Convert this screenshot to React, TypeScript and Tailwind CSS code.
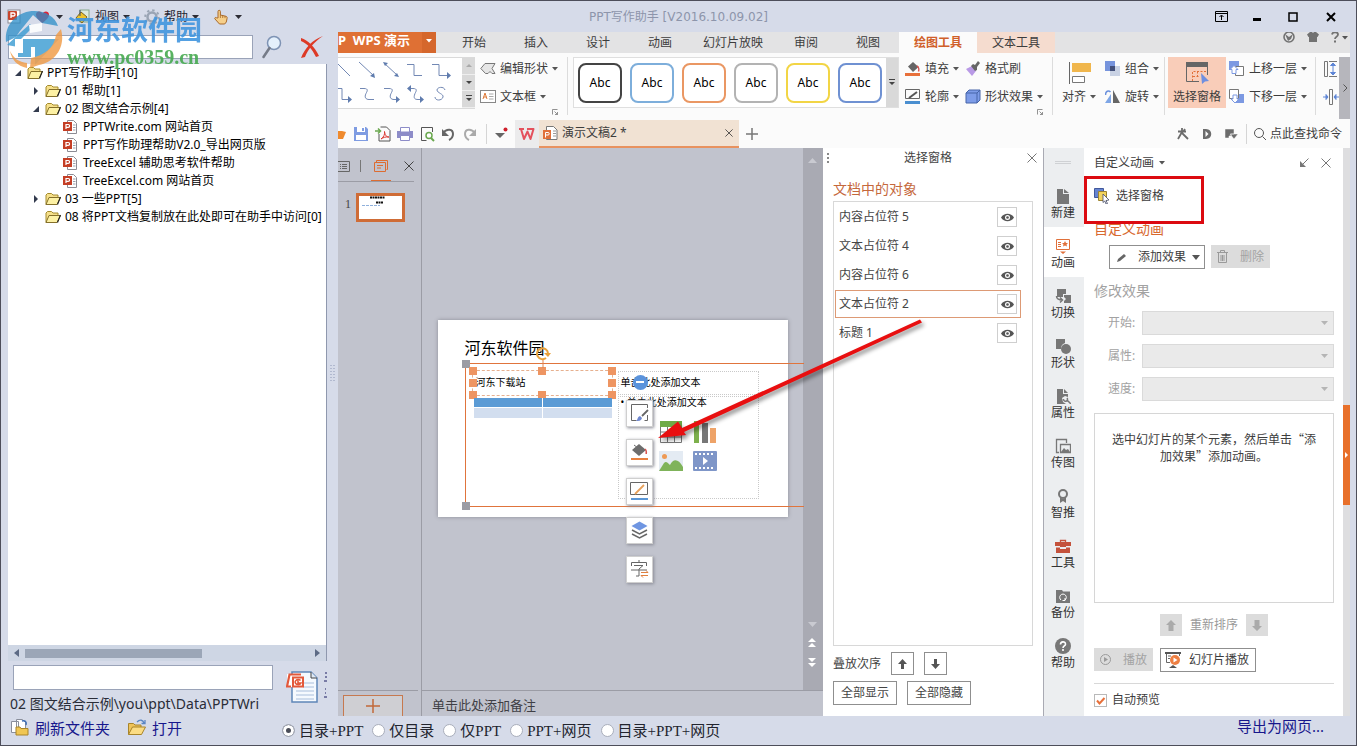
import React from "react";

type Kids = { children?: React.ReactNode };

function Icon({ w = 16, h = 16, children }: { w?: number; h?: number } & Kids) {
  return (
    <svg width={w} height={h} viewBox={`0 0 ${w} ${h}`} fill="none" className="shrink-0" aria-hidden="true">
      {children}
    </svg>
  );
}

function Caret({ className = "text-[#555]" }: { className?: string }) {
  return (
    <svg width="6" height="4" viewBox="0 0 6 4" className={`shrink-0 ${className}`} aria-hidden="true">
      <path d="M0 0h6L3 3.5z" fill="currentColor" />
    </svg>
  );
}

function Cross({ size = 10, className = "" }: { size?: number; className?: string }) {
  return (
    <svg width={size} height={size} viewBox="0 0 10 10" className={`shrink-0 ${className}`} aria-hidden="true">
      <path d="M.5.5l9 9M9.5.5l-9 9" stroke="currentColor" fill="none" />
    </svg>
  );
}

/* ---------- title bar ---------- */

function MenuCaret() {
  return (
    <svg width="7" height="4" viewBox="0 0 7 4" className="shrink-0" aria-hidden="true">
      <path d="M0 0h7L3.500 4z" fill="#2c2c34" />
    </svg>
  );
}

function TitleBar() {
  return (
    <header className="relative flex h-[31px] shrink-0 items-center justify-between">
      <nav className="flex items-center pl-[6px] text-[#1f2430]">
        <button aria-label="应用" className="mr-3">
          <Icon>
            <rect x="1" y="1" width="12" height="13" fill="#fff" stroke="#8a8a92" />
            <rect x="1" y="2" width="9" height="9" rx="1" fill="#c8452c" />
            <path d="M4 9V4h2.500a1.500 1.500 0 010 3H4" stroke="#fff" strokeWidth="1.300" />
          </Icon>
        </button>
        <button aria-label="收藏" className="mr-3 flex items-center gap-[6px]">
          <Icon w={15} h={14}>
            <path d="M7.500 13C3 9.500 1 7.500 1 4.600 1 1 5.800.400 7.500 3.600 9.200.400 14 1 14 4.600c0 2.900-2 4.900-6.500 8.400z" fill="#dc2438" />
          </Icon>
          <MenuCaret />
        </button>
        <button className="mr-[14px] flex items-center gap-1">
          <Icon>
            <rect x="5" y="1" width="9" height="12" fill="#dcebdc" stroke="#86a78a" />
            <path d="M1 9l5-6 6 5-5 6z" fill="#eec42a" stroke="#7c6420" />
            <path d="M5 7V1" stroke="#41506a" />
          </Icon>
          视图
          <MenuCaret />
        </button>
        <button className="mr-[14px] flex items-center gap-1">
          <Icon>
            <circle cx="8" cy="8" r="4.500" stroke="#9aa4b4" strokeWidth="2.500" />
            <circle cx="8" cy="8" r="6.800" stroke="#9aa4b4" strokeWidth="2" strokeDasharray="2.400 2.940" />
          </Icon>
          帮助
          <MenuCaret />
        </button>
        <button aria-label="手形工具" className="flex items-center gap-[6px]">
          <Icon>
            <path d="M5 9V2.500a1.200 1.200 0 012.400 0V6l5.600 1.300c1 .300 1.300 1 1.100 2l-.800 3.700-1.600 2H6.500L1.800 9.800c-.400-1 .800-1.800 1.700-1z" fill="#f6cf8a" stroke="#a8692a" />
            <path d="M7.400 6v3M9.700 6.600V9M12 7.100v2" stroke="#a8692a" strokeWidth=".8" />
          </Icon>
          <MenuCaret />
        </button>
      </nav>
      <h1 className="pointer-events-none absolute inset-x-0 text-center font-['DejaVu_Sans','Noto_Sans_CJK_SC',sans-serif] text-xs text-[#8d95ab]">
        PPT写作助手 [V2016.10.09.02]
      </h1>
      <div className="flex items-center gap-6 pr-5 text-black">
        <button aria-label="置顶">
          <Icon w={13} h={12}>
            <path d="M.5.500h12v10H.500zM.500 2.500h12M6.500 9V4.500M4.500 6l2-2 2 2" stroke="currentColor" />
          </Icon>
        </button>
        <button aria-label="最小化">
          <Icon w={10} h={12}><path d="M1 7h8v3H1z" fill="currentColor" /></Icon>
        </button>
        <button aria-label="最大化" className="ml-[2px]">
          <Icon w={10} h={10}><path d="M1 1h8v8H1z" stroke="currentColor" strokeWidth="1.500" /></Icon>
        </button>
        <button aria-label="关闭" className="ml-1">
          <Icon w={10} h={10}><path d="M1 1l8 8M9 1L1 9" stroke="currentColor" strokeWidth="2" /></Icon>
        </button>
      </div>
    </header>
  );
}

function Watermark() {
  return (
    <div className="pointer-events-none absolute left-[4px] top-[8px] z-20 flex gap-1 opacity-90" aria-hidden="true">
      <svg width="58" height="60" viewBox="0 0 58 60">
        <path d="M1 33C-1 14 14 2 29 2c12 0 21 6 24 15L37 14 28 6 15 22l-4 6z" fill="#2f8fc9" opacity=".85" />
        <path d="M2 36l14-13 9-8 3 3-12 12h38L30 56v-18h-4v10H13v-10z" fill="#3b9bd1" opacity=".9" />
        <path d="M10 30h8v14h-8zM24 16l13-2v8l-12 2z" fill="#fff" />
        <path d="M56 20c5 18-6 33-22 36l-9 3 1-10c14-3 23-10 25-23z" fill="#f09a45" opacity=".9" />
        <path d="M5 42c4 8 9 11 17 12v5C12 57 7 51 5 42z" fill="#f09a45" opacity=".9" />
      </svg>
      <div className="flex flex-col pt-[4px]">
        <span className="font-['Noto_Sans_CJK_SC',sans-serif] text-[27px] font-bold leading-8 text-[#4296df]">河东软件园</span>
        <span className="font-['Liberation_Serif',serif] text-[20px] font-bold leading-[24px] text-[#47aa50]">www.pc0359.cn</span>
      </div>
    </div>
  );
}

/* ---------- directory panel ---------- */

function FolderIcon() {
  return (
    <Icon w={16} h={14}>
      <path d="M1 12.500V3l1.500-1.500h4L8 3h5v2" fill="#f6e08a" stroke="#a38a2c" />
      <path d="M1 12.500L4 5.500h11.500L12 12.500z" fill="#fdf1a4" stroke="#85702a" />
      <path d="M12.500 12.500L15.500 5" stroke="#222" strokeWidth="1.200" />
    </Icon>
  );
}

function PptFileIcon() {
  return (
    <Icon w={15} h={14}>
      <path d="M4.500.500h6l3 3v10h-9z" fill="#fff" stroke="#8c8c94" />
      <path d="M10 5h2.500M10 7.500h2.500M10 10h2.500" stroke="#9aa0ac" />
      <rect y="2" width="9" height="9" fill="#c43e25" />
      <path d="M3 9V4.500h2.200a1.400 1.400 0 010 2.800H3" stroke="#fff" strokeWidth="1.200" />
    </Icon>
  );
}

const tree: { label: string; level: 0 | 1 | 2; open?: boolean; leaf?: boolean }[] = [
  { label: "PPT写作助手[10]", level: 0, open: true },
  { label: "01 帮助[1]", level: 1 },
  { label: "02 图文结合示例[4]", level: 1, open: true },
  { label: "PPTWrite.com 网站首页", level: 2, leaf: true },
  { label: "PPT写作助理帮助V2.0_导出网页版", level: 2, leaf: true },
  { label: "TreeExcel 辅助思考软件帮助", level: 2, leaf: true },
  { label: "TreeExcel.com 网站首页", level: 2, leaf: true },
  { label: "03 一些PPT[5]", level: 1 },
  { label: "08 将PPT文档复制放在此处即可在助手中访问[0]", level: 1, leaf: true },
];
const indent = { 0: "pl-[5px]", 1: "pl-[23px]", 2: "pl-[41px]" };

function DirectoryPanel() {
  return (
    <aside className="flex w-[326px] shrink-0 flex-col pl-[7px]">
      <div className="flex h-8 items-center pb-[2px]">
        <input aria-label="搜索" className="h-6 w-[245px] border border-[#9aa3b8] bg-white px-1" />
        <button aria-label="查找" className="ml-[9px]">
          <Icon w={20} h={24}>
            <circle cx="12" cy="8" r="6.500" fill="#e4f0fc" stroke="#7e93b4" strokeWidth="1.500" />
            <path d="M7.500 13L1.500 22" stroke="#757b88" strokeWidth="2.500" strokeLinecap="round" />
          </Icon>
        </button>
        <button aria-label="清除" className="ml-[18px]">
          <Icon w={24} h={24}>
            <path d="M1 3C8 5 15 12 19 21l-3 1C12 14 8 9 1 6zM23 1C14 7 8 14 5 22l-4 1C5 13 12 5 23 1z" fill="#dd3a26" />
          </Icon>
        </button>
      </div>
      <ul className="min-h-0 flex-1 overflow-hidden border-r border-[#8f98ae] bg-white text-black">
        {tree.map((n) => (
          <li key={n.label} className={`flex h-[18px] items-center whitespace-nowrap ${indent[n.level]}`}>
            <span className="flex w-[14px] shrink-0 items-center pl-[2px]">
              {!n.leaf && (
                <Icon w={7} h={8}>
                  {n.open ? <path d="M6 1v6H0z" fill="#333b4e" /> : <path d="M1 0l4 4-4 4z" fill="#333b4e" />}
                </Icon>
              )}
            </span>
            {n.level === 2 ? <PptFileIcon /> : <FolderIcon />}
            <span className={n.level === 2 ? "pl-[5px]" : "pl-1"}>{n.label}</span>
          </li>
        ))}
      </ul>
      <div className="flex h-4 items-center border-r border-[#8f98ae] bg-[#ced6e4] px-[5px] text-[#5d6b85]">
        <Icon w={6} h={8}><path d="M6 0v8L1 4z" fill="currentColor" /></Icon>
        <div className="ml-[6px] flex-1"><div className="h-[9px] w-[61%] bg-[#9ba6b7]" /></div>
        <Icon w={6} h={8}><path d="M0 0v8l5-4z" fill="currentColor" /></Icon>
      </div>
      <div className="flex h-[55px] pl-[2px]">
        <div className="flex w-[263px] flex-col pt-[4px]">
          <input aria-label="名称" className="ml-[3px] h-[25px] border border-[#9aa3b8] bg-white px-1" />
          <output className="whitespace-nowrap pt-[3px] text-[14px] leading-[22px] text-[#2a2d38]">
            02 图文结合示例\you\ppt\Data\PPTWri
          </output>
        </div>
        <button aria-label="生成文档" className="flex w-[54px] items-start gap-[6px] overflow-hidden pl-[13px] pt-[10px]">
          <Icon w={32} h={32}>
            <path d="M6 1h19l6 6v24H6z" fill="#f5f9fe" stroke="#5f86b8" strokeWidth="1.500" />
            <path d="M25 1v6h6" fill="#dfe9f5" stroke="#444" />
            <path d="M17 12h11M17 16h11M10 20h18M10 24h18M10 28h18" stroke="#a9bedb" />
            <rect x="1" y="3" width="14" height="13" fill="#fff" />
            <path d="M15 3.500H3.500L1 15.500h4" stroke="#e3593b" strokeWidth="2.200" />
            <path d="M17 6.500H7v9h10z" fill="#fff" stroke="#e3593b" strokeWidth="2" />
            <path d="M14.500 9.500a3 2.500 0 10.500 2.500h-3V9.500" stroke="#e3593b" strokeWidth="1.600" />
          </Icon>
          <Icon w={3} h={28}>
            <path d="M1 2h2M1 6h2M0 10h3M1 18h1M1 22h1M0 26h3" stroke="#1a1a60" />
          </Icon>
        </button>
      </div>
    </aside>
  );
}

/* ---------- ribbon ---------- */

const tabs = ["开始", "插入", "设计", "动画", "幻灯片放映", "审阅", "视图"];

function TabStrip() {
  return (
    <div className="flex h-[21px] shrink-0 bg-[#e3e3e4] text-[#3d3d3d]">
      <button className="flex w-[98px] shrink-0 items-center bg-[#df7034] font-bold text-white">
        <span className="flex-1 whitespace-nowrap pb-1 text-left text-[13px]">P&nbsp; WPS 演示</span>
        <span className="flex h-full w-[14px] items-center justify-center bg-[#d5672c] pb-1"><Caret className="text-white" /></span>
      </button>
      <nav className="flex pl-[7px]">
        {tabs.map((t) => (
          <button key={t} className="min-w-[62px] whitespace-nowrap px-3">{t}</button>
        ))}
        <button className="w-[78px] bg-[#fbfbfb] font-bold text-[#d0602a]">绘图工具</button>
        <button className="w-[78px] bg-[#f5dccf]">文本工具</button>
      </nav>
      <div className="ml-auto flex items-start gap-3 pr-[2px] text-[#727272]">
        <button aria-label="皮肤中心">
          <Icon w={12} h={12}>
            <circle cx="6" cy="5" r="5" stroke="currentColor" strokeWidth="1.600" />
            <path d="M2 2l4 3 4-3-2 5-3 2z" fill="currentColor" />
          </Icon>
        </button>
        <button aria-label="换肤">
          <Icon w={12} h={12}><path d="M3 0h2l1 1 1-1h2l3 2.500L10.500 5H10v5H2V5h-.500L0 2.500z" fill="currentColor" /></Icon>
        </button>
        <button aria-label="帮助" className="flex items-center gap-[3px]">
          <Icon w={8} h={12}>
            <path d="M1 2.500C1.500-.5 7-.5 7 2.500 7 5 4 4.500 4 7" stroke="currentColor" strokeWidth="1.800" />
            <path d="M3 8.500h2v2H3z" fill="currentColor" />
          </Icon>
          <Caret />
        </button>
      </div>
    </div>
  );
}

function Cmd({ icon, label, caret = true }: { icon: React.ReactNode; label: string; caret?: boolean }) {
  return (
    <button className="flex h-5 items-center gap-1 whitespace-nowrap">
      {icon}
      <span>{label}</span>
      {caret && <Caret />}
    </button>
  );
}

function CmdColumn({ children, className = "" }: { className?: string } & Kids) {
  return <div className={`flex shrink-0 flex-col items-start gap-2 pt-[2px] ${className}`}>{children}</div>;
}

function Divider() {
  return <div className="h-[58px] w-px shrink-0 bg-[#dcdcdc]" />;
}

function Launcher({ className = "" }: { className?: string }) {
  return (
    <button aria-label="更多选项" className={`absolute ${className}`}>
      <Icon w={6} h={6}><path d="M.5 5.500v-5h5M2.500 2.500l3 3M5.500 3v2.500H3" stroke="#777" strokeWidth=".8" /></Icon>
    </button>
  );
}

const swatches = [
  "border-[#444]",
  "border-[#7daedb]",
  "border-[#ea9763]",
  "border-[#b3b3b3]",
  "border-[#f2d545]",
  "border-[#6f91d2]",
];

function LineGallery() {
  return (
    <div className="flex h-[52px] w-[137px] shrink-0 border-y border-[#dadada] bg-white">
      <svg width="124" height="50" viewBox="0 0 124 50" fill="none" stroke="#7288b4" aria-hidden="true">
        <path d="M0 6l12 12M21 4l15 14M46 5l13 12M69 6.500h7v11h8M94 6.500h7v11h8" />
        <path d="M0 30.500h4v11h6M22 30.500h4c5 0 3 3 2 5-2 4 0 6 3 6h5M46 30.500h5c5 0 3 3 2 5-2 4 0 6 3 6h4M71 30.500h4c5 0 3 3 2 5-2 5 0 6 3 6h3M107 32c-1-4-8-3-8 0s7 4 6 7c-1 4-8 4-8 0" />
        <path d="M37 20l-5-2 4-3zM61 19l-5-1 3-3zM45 4l5 1-3 3zM109 21v-7l4 3.500zM10 45v-7l4 3.500zM58 45v-7l4 3.500zM82 45v-7l4 3.500zM69 30.500l4-3.500v7z" fill="#5f7cae" stroke="none" />
      </svg>
      <div className="flex w-[13px] flex-col bg-[#d9d9d9]">
        {["上滚", "下滚", "展开"].map((t, i) => (
          <button key={t} aria-label={t} className="flex flex-1 items-center justify-center border-b border-[#efefef]">
            <Icon w={6} h={8}>
              {i === 0 && <path d="M0 5h6L3 2z" fill="#aaa" />}
              {i === 1 && <path d="M0 2h6L3 5z" fill="#444" />}
              {i === 2 && <path d="M0 0h6v1H0zM0 3h6L3 6z" fill="#444" />}
            </Icon>
          </button>
        ))}
      </div>
    </div>
  );
}

function Ribbon() {
  return (
    <div className="flex h-[67px] shrink-0 bg-[#fbfbfb] pt-1 text-[#3d3d3d]">
      <LineGallery />
      <div className="relative flex h-[62px] shrink-0 pl-[5px] pr-[9px]">
        <CmdColumn>
          <Cmd
            icon={<Icon><path d="M5 2.500h10l-3 5 3 5H12l-2-2-2 2H5.500L.800 7.500z" fill="#e6e6e6" stroke="#777" /></Icon>}
            label="编辑形状"
          />
          <Cmd
            icon={
              <Icon>
                <rect x=".5" y="1.500" width="15" height="12" fill="#fff" stroke="#888" />
                <path d="M3 10l2-6 2 6M3.500 8h3" stroke="#dd7b3a" />
                <path d="M9 5h4.500M9 7.500h4.500M9 10h4.500" stroke="#a8a8a8" />
              </Icon>
            }
            label="文本框"
          />
        </CmdColumn>
        <Launcher className="bottom-[4px] right-[9px]" />
      </div>
      <Divider />
      <div className="ml-[5px] mr-[6px] flex h-[51px] shrink-0 border border-[#dfdfdf] bg-white">
        <div className="flex items-center gap-2 px-1">
          {swatches.map((s) => (
            <button key={s} className={`h-10 w-11 rounded-lg border-2 bg-white text-black ${s}`}>Abc</button>
          ))}
        </div>
        <button aria-label="更多样式" className="flex w-3 items-center justify-center bg-[#d9d9d9]">
          <Icon w={6} h={8}><path d="M0 0h6v1H0zM0 3h6L3 6z" fill="#444" /></Icon>
        </button>
      </div>
      <CmdColumn>
        <Cmd
          icon={
            <Icon>
              <path d="M3 5.500L8 1l5.500 5L8 11z" fill="#666" />
              <path d="M12 5c2 1 2 4 1.500 5.500" stroke="#d9534f" strokeWidth="1.500" />
              <path d="M0 12h15v3H0z" fill="#e8703a" />
            </Icon>
          }
          label="填充"
        />
        <Cmd
          icon={
            <Icon>
              <path d="M.5.500h14v9H.500z" stroke="#666" />
              <path d="M4 9l8-6" stroke="#555" strokeWidth="2" />
              <path d="M0 12h15v3H0z" fill="#4a8fd0" />
            </Icon>
          }
          label="轮廓"
        />
      </CmdColumn>
      <div className="relative ml-[6px] flex h-[62px] shrink-0 pr-[9px]">
        <CmdColumn>
          <Cmd
            icon={
              <Icon>
                <path d="M1 8l6-3 4 5-4 5z" fill="#b99ae6" />
                <path d="M6 5l2-2 2 1 3-4 2 2-3 4v3l-2 1z" fill="#666" />
              </Icon>
            }
            label="格式刷"
            caret={false}
          />
          <Cmd
            icon={
              <Icon>
                <path d="M1 4l3-3h11v10l-3 3H1z" fill="#7d9ce8" stroke="#4664a8" />
                <path d="M1 4h11v10M12 4l3-3" stroke="#4664a8" />
              </Icon>
            }
            label="形状效果"
          />
        </CmdColumn>
        <Launcher className="bottom-[4px] right-[9px]" />
      </div>
      <Divider />
      <button className="mx-[9px] flex w-[34px] shrink-0 flex-col items-start pt-[5px]">
        <Icon w={30} h={22}>
          <path d="M7.500 0v22" stroke="#666" />
          <rect x="10" y="1" width="19" height="9" fill="#f0b64c" />
          <path d="M10.500 14.500h12v6h-12z" fill="#fff" stroke="#777" />
        </Icon>
        <span className="flex items-center gap-1 whitespace-nowrap pt-[3px] leading-5">对齐 <Caret /></span>
      </button>
      <CmdColumn className="pr-[5px]">
        <Cmd
          icon={
            <Icon>
              <path d="M5 5h10v10H5z" fill="#c9d2e4" />
              <path d="M0 0h10v10H0z" fill="#7794dc" />
              <path d="M5 5h5v5H5z" fill="#43507a" />
            </Icon>
          }
          label="组合"
        />
        <Cmd
          icon={
            <Icon>
              <path d="M8 1v13h7z" fill="#666" />
              <path d="M6 5v9H0z" fill="#7ea6e6" />
              <path d="M.5 6c0-4 3-5 5-3" stroke="#6a90dc" strokeWidth="1.500" />
            </Icon>
          }
          label="旋转"
        />
      </CmdColumn>
      <Divider />
      <button className="mx-[3px] flex h-[51px] w-[58px] shrink-0 flex-col items-center bg-[#f9cdb9] pt-[5px]">
        <Icon w={24} h={22}>
          <path d="M14 19.500H1.500v-18h21V13" stroke="#666" />
          <path d="M1 0h22v5H1z" fill="#666" />
          <path d="M7.500 19V9.500H22M12.500 15V10M8 14.500h7" stroke="#e0703a" strokeDasharray="2 1.500" />
          <path d="M16 11l8 8-4 .500-3 2.500z" fill="#6f8fe0" />
        </Icon>
        <span className="whitespace-nowrap pt-[3px] leading-5">选择窗格</span>
      </button>
      <CmdColumn className="pr-[8px]">
        <Cmd
          icon={
            <Icon>
              <path d="M0 0h10v9H0z" fill="#7c99e2" />
              <path d="M6.500 5.500h8v9h-8z" fill="#fff" stroke="#777" />
              <path d="M5 4.500l4 4H7v4H3v-4H1z" fill="#fff" stroke="#7c99e2" />
            </Icon>
          }
          label="上移一层"
        />
        <Cmd
          icon={
            <Icon>
              <path d="M6 5h9v9H6z" fill="#7c99e2" />
              <path d="M.5.500h9v9h-9z" fill="#fff" stroke="#777" />
              <path d="M6 14l4-4H8V6H4v4H2z" fill="#fff" stroke="#7c99e2" />
            </Icon>
          }
          label="下移一层"
        />
      </CmdColumn>
      <Divider />
      <CmdColumn className="pl-[7px]">
        <button aria-label="高度" className="flex h-5 items-center">
          <Icon>
            <path d="M1.500.500h3v15h-3zM6 .500h8M6 15.500h8" stroke="#777" />
            <path d="M10 2v12M7.500 4.500L10 2l2.500 2.500zM7.500 11.500L10 14l2.500-2.500z" stroke="#5f86d6" fill="#5f86d6" />
          </Icon>
        </button>
        <button aria-label="宽度" className="flex h-5 items-center">
          <Icon>
            <path d="M6.500.500h3v15h-3z" stroke="#777" />
            <path d="M0 8h5M11 8h5M3 5.500L5 8l-2 2.500zM13 5.500L11 8l2 2.500z" stroke="#5f86d6" fill="#5f86d6" />
          </Icon>
        </button>
      </CmdColumn>
      <button aria-label="向右滚动" className="ml-auto flex h-[62px] w-3 shrink-0 items-center justify-center bg-[#b6b6bc] text-[#555]">
        <Icon w={5} h={8}><path d="M.5.500L4 4 .500 7.500" stroke="currentColor" /></Icon>
      </button>
    </div>
  );
}

function DocumentBar() {
  return (
    <div className="flex h-7 shrink-0 items-center bg-[#fbfbfb] text-[#3d3d3d]">
      <div className="flex w-[148px] shrink-0 items-center gap-[6px]">
        <button aria-label="打开">
          <Icon w={8}><path d="M0 5h4l4 1-3 7H0z" fill="#ef8a2e" /></Icon>
        </button>
        <button aria-label="保存" className="ml-[1px]">
          <Icon>
            <path d="M1 1h12l2 2v12H1z" fill="#7f9ce2" />
            <path d="M4 1h8v5H4zM3 9h10v5H3z" fill="#fff" />
            <path d="M9 2h2v3H9z" fill="#7f9ce2" />
          </Icon>
        </button>
        <button aria-label="输出为PDF">
          <Icon>
            <path d="M5.500 1h6l3.500 3.500V15H4V8" stroke="#555" />
            <path d="M0 5h5M3 2.500L5.500 5 3 7.500" stroke="#6aa84f" strokeWidth="1.500" />
            <path d="M6 13c3-2 4-5 3.500-7.500C10 10 12 11 14 11c-3-.500-6 .500-8 2z" stroke="#d9372e" />
          </Icon>
        </button>
        <button aria-label="打印">
          <Icon>
            <path d="M0 5h16v7H0z" fill="#8d8cc8" />
            <path d="M3.500 1.500h9V6h-9z" fill="#fff" stroke="#8d8cc8" />
            <path d="M3.500 9.500h9v5h-9z" fill="#fff" stroke="#8d8cc8" />
          </Icon>
        </button>
        <button aria-label="打印预览">
          <Icon>
            <path d="M13.500 6V1.500h-11v13h5" stroke="#555" />
            <circle cx="10" cy="9.500" r="3" fill="#fff" stroke="#6aa84f" strokeWidth="1.500" />
            <path d="M12 12l3 3" stroke="#6aa84f" strokeWidth="2" />
          </Icon>
        </button>
        <button aria-label="撤销">
          <Icon w={14}><path d="M2 7c4-5 10-4 10 1 0 3-2 5-4 6" stroke="#666" strokeWidth="2" /><path d="M1 3v7h7z" fill="#666" /></Icon>
        </button>
        <button aria-label="恢复" className="ml-[2px]">
          <Icon w={14}><path d="M12 7C8 2 2 3 2 8c0 3 2 5 4 6" stroke="#aaa" strokeWidth="2" /><path d="M13 3v7H6z" fill="#aaa" /></Icon>
        </button>
      </div>
      <div className="h-5 w-px bg-[#d5d5d5]" />
      <button aria-label="自定义快速访问" className="flex w-7 shrink-0 items-center justify-center">
        <Icon w={13} h={14}><path d="M0 6h10l-5 5z" fill="#666" /><circle cx="10.500" cy="2.500" r="2" fill="#cf1f2b" /></Icon>
      </button>
      <button aria-label="WPS 首页" className="flex h-full w-6 shrink-0 items-center justify-center bg-[#ebebec]">
        <Icon w={16} h={14}>
          <path d="M0 2h5M2 2l3 10L8.500 4.500 11.500 12l3-10H8" stroke="#e4505c" strokeWidth="2" strokeLinejoin="round" />
        </Icon>
      </button>
      <div className="flex h-full w-[200px] shrink-0 items-center border-b-2 border-[#e8925f] bg-[#f1e2d3] pl-1 pr-[6px]">
        <Icon w={15} h={16}>
          <path d="M3.500 1.500h7l3.500 3.500v9.500H3.500z" fill="#fff" stroke="#777" />
          <path d="M10 6h3M10 8.500h3M10 11h3" stroke="#999" />
          <path d="M0 5h8v9H0z" fill="#e0703a" />
          <path d="M2.500 12.500v-5H5a1.200 1.200 0 010 2.500H2.500" stroke="#fff" />
        </Icon>
        <span className="flex-1 pl-1">演示文稿2 *</span>
        <button aria-label="关闭文档"><Cross size={8} className="text-[#333]" /></button>
      </div>
      <button aria-label="新建文档" className="ml-[7px]">
        <Icon w={12} h={12}><path d="M6 0v12M0 6h12" stroke="#777" strokeWidth="1.500" /></Icon>
      </button>
      <div className="ml-auto flex items-center gap-3 pr-[7px] text-[#6c6c6c]">
        <button aria-label="智能助手">
          <Icon w={12} h={12}><path d="M1 3.500h8M5 0v4L1 11M5 5l6 6M8 1l-2 3" stroke="currentColor" strokeWidth="1.800" /></Icon>
        </button>
        <button aria-label="文档助手">
          <Icon w={12} h={12}><path d="M2 1h3c7 0 7 10 0 10H2z" fill="currentColor" /><path d="M4.500 3v6l3-3z" fill="#fbfbfb" /></Icon>
        </button>
        <button aria-label="视图切换">
          <Icon w={13} h={12}><path d="M0 1h9v5H6v2H4v2H0zM5 6h8l-4 5z" fill="currentColor" stroke="#fbfbfb" strokeWidth=".5" /></Icon>
        </button>
        <label className="-ml-1 flex h-5 items-center gap-[3px] border-l border-[#d5d5d5] pl-[6px]">
          <Icon w={14} h={14}><circle cx="6" cy="6" r="4.500" stroke="#555" /><path d="M9.500 9.500L13 13" stroke="#555" /></Icon>
          <input
            placeholder="点此查找命令"
            className="w-[73px] bg-transparent outline-none placeholder:text-[#3d3d3d] placeholder:opacity-100"
          />
        </label>
      </div>
    </div>
  );
}

/* ---------- slide area ---------- */

function Thumbnails() {
  return (
    <section className="flex w-[83px] shrink-0 flex-col text-[#444]">
      <div className="mr-[7px] flex h-[34px] items-center border-b border-[#9b9ca5] pt-[3px]">
        <button aria-label="大纲">
          <Icon w={12} h={11}><path d="M0 .500h11.500v10H0M2 3.500h1M2 5.500h1M2 7.500h1M4 3.500h5M4 5.500h5M4 7.500h5" stroke="#666" /></Icon>
        </button>
        <span className="mx-[10px] h-3 w-px bg-[#777]" />
        <button aria-label="幻灯片" className="flex h-full items-center border-b border-[#dd6c31] px-[3px]">
          <Icon w={14} h={12}><path d="M.5 2.500h11v9H.500zM2.500 2V.500h11v9h-1M3 5.500h6M3 8h4" stroke="#dd6c31" /></Icon>
        </button>
        <button aria-label="关闭缩略图" className="ml-auto"><Cross size={10} /></button>
      </div>
      <div className="flex flex-1 items-start gap-[5px] pl-[7px] pt-[11px]">
        <span className="pt-[3px] font-['Liberation_Serif',serif] leading-4">1</span>
        <button aria-label="幻灯片 1" className="h-[29px] w-[49px] border-[3px] border-[#cf6c36] bg-white">
          <svg width="43" height="23" viewBox="0 0 43 23" aria-hidden="true">
            <path d="M11 1.500h15M17 6.500h7" stroke="#111" strokeWidth="2" strokeDasharray="2 .5" />
            <path d="M3 9.500h18" stroke="#8fb0dc" strokeDasharray="3 1" />
          </svg>
        </button>
      </div>
      <div className="mr-[3px] flex h-[26px] items-end border-t border-[#9b9ca5] pl-[5px]">
        <button aria-label="新建幻灯片" className="flex h-[21px] w-[60px] items-center justify-center border border-b-0 border-[#c6794f] bg-[#cfcfd3]">
          <Icon w={14} h={14}><path d="M7 0v14M0 7h14" stroke="#c2693a" strokeWidth="1.500" /></Icon>
        </button>
      </div>
    </section>
  );
}

const floatTools: { label: string; art: React.ReactNode }[] = [
  {
    label: "样式",
    art: (
      <>
        <path d="M17.500 5V1.500h-16v16h5M17.500 12v5.500h-3" stroke="#666" />
        <path d="M18 7l-6 6" stroke="#666" strokeWidth="1.800" />
        <path d="M10 13l2 2c-1 3-3 3-6 3 2-1 1-4 4-5z" fill="#6f87cf" />
      </>
    ),
  },
  {
    label: "填充",
    art: (
      <>
        <path d="M2 8l7-6 7 6-7 6z" fill="#6d6d6d" />
        <path d="M4 3l4 3" stroke="#6d6d6d" />
        <path d="M15 7c1.500 1 1.500 3 1.200 5" stroke="#d9534f" strokeWidth="1.500" />
        <path d="M1 16h17v2H1z" fill="#e8803f" />
      </>
    ),
  },
  {
    label: "轮廓",
    art: (
      <>
        <path d="M.5 1.500h17v12H.500z" stroke="#666" />
        <path d="M5 13l9-9" stroke="#e8a15a" strokeWidth="1.800" />
        <path d="M1 17h17v2H1z" fill="#5a96d6" />
      </>
    ),
  },
  {
    label: "图层",
    art: (
      <>
        <path d="M1.500 6L9.500 1.500 17.500 6l-8 4.500z" fill="#6f96e2" />
        <path d="M2 10l7.500 4 7.500-4M2 14l7.500 4 7.500-4" stroke="#666" strokeWidth="1.500" />
      </>
    ),
  },
  {
    label: "文字",
    art: (
      <>
        <path d="M9 1v2M1.500 7V3.500h15V7M4 6.500h9L9 10v7H6M1 11h16" stroke="#666" />
        <path d="M11 13.500h7l-2-2M18 16.500h-7l2 2" stroke="#e08040" />
      </>
    ),
  },
];

const handle = "absolute size-2 -translate-x-1/2 -translate-y-1/2 bg-[#ee9562]";

function Slide() {
  return (
    <div className="relative h-[197px] w-[350px] shrink-0 bg-white text-[10px] leading-4 text-black shadow-[0_0_4px_#8a8b95]">
      <h2 className="absolute left-[27px] top-[16px] text-[16px] leading-6">河东软件园</h2>
      <div className="absolute left-[27px] top-[43px] h-[144px] w-[339px] border border-r-0 border-[#e0743c]">
        <span className="absolute -left-1 -top-1 size-2 bg-[#9b9ca4]" />
        <span className="absolute -bottom-1 -left-1 size-2 bg-[#9b9ca4]" />
      </div>
      <div className="absolute left-[34px] top-[50px] h-[26px] w-[141px] border border-dashed border-[#e6b08f] pl-[3px] pt-[3px]">
        河东下载站
        <span className={`${handle} left-0 top-0`} />
        <span className={`${handle} left-1/2 top-0`} />
        <span className={`${handle} left-full top-0`} />
        <span className={`${handle} left-0 top-1/2`} />
        <span className={`${handle} left-full top-1/2`} />
        <span className={`${handle} left-0 top-full`} />
        <span className={`${handle} left-1/2 top-full`} />
        <span className={`${handle} left-full top-full`} />
      </div>
      <svg width="16" height="26" viewBox="0 0 16 26" fill="none" className="absolute left-[97px] top-[27px]" aria-hidden="true">
        <path d="M11 11a5.500 5.500 0 112-5" stroke="#e9a23c" strokeWidth="2" />
        <path d="M9 6h7l-3 4z" fill="#e9a23c" />
        <path d="M8 13v8" stroke="#e08453" />
      </svg>
      <table className="absolute left-[36px] top-[78px] h-5 w-[138px] table-fixed border-collapse">
        <tbody>
          <tr className="h-[10px] bg-[#5b9bd5]"><td className="border-r border-white p-0" /><td className="p-0" /></tr>
          <tr className="h-[10px] border-t border-white bg-[#d2deef]"><td className="border-r border-white p-0" /><td className="p-0" /></tr>
        </tbody>
      </table>
      <div className="absolute left-[180px] top-[51px] h-6 w-[141px] border border-dotted border-[#c9c9c9] pl-[2px] pt-[2px]">单击此处添加文本</div>
      <div className="absolute left-[180px] top-[76px] h-[103px] w-[141px] border border-dotted border-[#c9c9c9] pl-[2px]">
        <p className="-mt-[3px]">• 单击此处添加文本</p>
        <div className="grid grid-cols-2 gap-x-[10px] gap-y-2 pl-[38px] pr-[40px] pt-[10px]">
          <Icon w={24} h={23}>
            <path d="M1.500 1.500h21v21h-21zM1 12h22M1 17h22M8.500 7v16M15.500 7v16" stroke="#777" />
            <path d="M1 1h22v6H1z" fill="#6faa47" />
          </Icon>
          <Icon w={24} h={23}>
            <path d="M1 1h5v22H1z" fill="#7db04c" />
            <path d="M9 3h6v20H9z" fill="#777" />
            <path d="M17 8h6v15h-6z" fill="#eea368" />
          </Icon>
          <Icon w={24} h={20}>
            <path d="M0 0h24v20H0z" fill="#e4ebf3" />
            <circle cx="5.500" cy="5.500" r="2.500" fill="#ee9a55" />
            <path d="M0 20l5-8c2-2 3-1 6 2 3-6 8-7 13 2v4z" fill="#7fb35a" />
          </Icon>
          <Icon w={24} h={20}>
            <rect width="24" height="20" rx="1" fill="#7f96c8" />
            <path d="M2 3h20M2 17h20" stroke="#fff" strokeWidth="2" strokeDasharray="2 2" />
            <path d="M10 6l5 4-5 4z" fill="#fff" />
          </Icon>
        </div>
      </div>
      <button aria-label="收起" className="absolute left-[195px] top-[55px] flex size-[15px] items-center justify-center rounded-full bg-[#5a93dc]">
        <span className="h-[2px] w-2 bg-white" />
      </button>
      <div className="absolute left-[188px] top-[80px] flex flex-col gap-3">
        {floatTools.map((t) => (
          <button key={t.label} aria-label={t.label} className="flex size-[27px] items-center justify-center border border-[#cfcfcf] bg-white shadow-[1px_1px_3px_#8a8b95]">
            <Icon w={19} h={20}>{t.art}</Icon>
          </button>
        ))}
      </div>
      <svg width="280" height="140" viewBox="0 0 280 140" className="pointer-events-none absolute left-[215px] top-[-8px] z-10 drop-shadow-[2px_3px_2px_rgba(0,0,0,0.45)]" aria-hidden="true">
        <path d="M5 126L25 109.500 29 116 267 7.500 269 10.500 31 120 33 123z" fill="#e80f10" />
      </svg>
    </div>
  );
}

function Canvas() {
  return (
    <section className="flex min-w-0 flex-1 flex-col border-l border-[#9b9ca5]">
      <div className="flex min-h-0 flex-1">
        <div className="flex min-w-0 flex-1 items-center justify-center pb-[2px]"><Slide /></div>
        <div className="flex w-5 shrink-0 flex-col items-center justify-between bg-[#a9aab3] pb-[23px] pt-[10px] pr-[2px] text-[#c9cad1]">
          <Icon w={9} h={5}><path d="M0 5h9L4.500 0z" fill="currentColor" /></Icon>
          <div className="flex flex-col items-center gap-[11px]">
            <Icon w={9} h={5}><path d="M0 0h9L4.500 5z" fill="currentColor" /></Icon>
            <Icon w={8} h={9}><path d="M0 4h8L4 0zM0 9h8L4 5z" fill="#fff" /></Icon>
            <Icon w={8} h={9}><path d="M0 0h8L4 4zM0 5h8L4 9z" fill="#fff" /></Icon>
          </div>
        </div>
      </div>
      <div className="flex h-[26px] items-center border-t border-[#9b9ca5] pl-[10px] pt-1 text-[13px] text-[#3f3f45]">单击此处添加备注</div>
    </section>
  );
}

/* ---------- selection pane ---------- */

const objects = ["内容占位符 5", "文本占位符 4", "内容占位符 6", "文本占位符 2", "标题 1"];
const outlined = "border border-[#8f8f8f] bg-white";

function SelectionPane() {
  return (
    <section className="flex w-[221px] shrink-0 flex-col border-r border-[#a9aab3] bg-white pb-[11px] pl-[10px] pr-[10px] text-[#444]">
      <header className="-ml-[7px] -mr-[4px] flex h-[19px] shrink-0 items-center justify-between">
        <Icon w={3} h={12}><path d="M1 2h2M1 6h2M1 10h2" stroke="#888" strokeWidth="2" /></Icon>
        <span>选择窗格</span>
        <button aria-label="关闭选择窗格"><Cross size={10} className="text-[#777]" /></button>
      </header>
      <h3 className="shrink-0 pb-[2px] pt-3 text-[14px] leading-5 text-[#c5683c]">文档中的对象</h3>
      <ul className="min-h-0 flex-1 border border-[#d8d8d8] pt-px">
        {objects.map((o, i) => (
          <li key={o} className={`mr-[11px] ml-px mb-px flex h-7 items-center justify-between border pl-[3px] pr-[3px] ${i === 3 ? "border-[#dd9a75]" : "border-transparent"}`}>
            <span>{o}</span>
            <button aria-label={`显示 ${o}`} className="flex size-5 items-center justify-center border border-[#cfcfcf]">
              <Icon w={13} h={9}>
                <path d="M0 4.500C3-.500 10-.500 13 4.500 10 9.500 3 9.500 0 4.500z" fill="#555" />
                <circle cx="6.500" cy="4.500" r="2.500" fill="#fff" />
                <circle cx="6.500" cy="4.500" r="1.300" fill="#555" />
              </Icon>
            </button>
          </li>
        ))}
      </ul>
      <div className="flex shrink-0 items-center gap-[10px] pt-[6px]">
        <span>叠放次序</span>
        <button aria-label="上移" className={`flex size-[23px] items-center justify-center ${outlined}`}>
          <Icon w={9} h={10}><path d="M4.500 0L9 5H6v5H3V5H0z" fill="#555" /></Icon>
        </button>
        <button aria-label="下移" className={`flex size-[23px] items-center justify-center ${outlined}`}>
          <Icon w={9} h={10}><path d="M4.500 10L9 5H6V0H3v5H0z" fill="#555" /></Icon>
        </button>
      </div>
      <div className="flex shrink-0 gap-[10px] pt-[6px]">
        <button className={`h-6 w-16 ${outlined}`}>全部显示</button>
        <button className={`h-6 w-16 ${outlined}`}>全部隐藏</button>
      </div>
    </section>
  );
}

/* ---------- side navigation ---------- */

const sideItems: { label: string; art: React.ReactNode }[] = [
  { label: "新建", art: <path d="M2 1h6v5h6v10H2zM9 1l5 4H9z" fill="#777" /> },
  {
    label: "动画",
    art: (
      <>
        <path d="M1.500 1.500h13v10h-13zM3 4.500h3M3 6.500h3M3 8.500h3" stroke="#e0703a" />
        <path d="M10 3l1 2h2l-1.500 1.500.500 2-2-1-2 1 .500-2L7 5h2zM5 13.500h6l-3 2.500z" fill="#e0703a" />
      </>
    ),
  },
  {
    label: "切换",
    art: (
      <>
        <path d="M2 1h9v5H8v3H2z" fill="#777" />
        <path d="M9 7h7v8H9v-2l2-2-2-2z" fill="#777" />
        <path d="M1.500 8c0 3 2 4 6 4M5 9.500L7.500 12 5 14.500" stroke="#777" strokeWidth="1.500" />
      </>
    ),
  },
  { label: "形状", art: <><path d="M1 1h9v4c-3 1-4 3-4 6H1z" fill="#777" /><circle cx="11" cy="11" r="5" fill="#777" /></> },
  {
    label: "属性",
    art: (
      <>
        <path d="M2 1h6v5h5v3l-3-1-3 2 1 4 3 2H2zM9 1l4 4H9z" fill="#777" />
        <path d="M8.500 11a2 2 0 103.500-1M12 12l4 4" stroke="#777" strokeWidth="1.500" />
      </>
    ),
  },
  {
    label: "传图",
    art: (
      <>
        <path d="M4 14.500H1.500v-13h10V5M5.500 6.500h10v8h-10z" stroke="#777" strokeWidth="1.300" />
        <path d="M6 14l3-4 2 2 2-1 2 3z" fill="#777" />
      </>
    ),
  },
  {
    label: "智推",
    art: (
      <>
        <circle cx="8" cy="6" r="4" stroke="#777" strokeWidth="2" />
        <path d="M5 9v6l3-2 3 2V9l-3 2z" fill="#777" />
      </>
    ),
  },
  {
    label: "工具",
    art: (
      <>
        <path d="M5.500 4V2.500h5V4" stroke="#c4523c" strokeWidth="1.300" />
        <path d="M0 4h16v4h-5v1H5V8H0zM1 9.500h4V11h6V9.500h4V15H1z" fill="#c4523c" />
      </>
    ),
  },
  {
    label: "备份",
    art: (
      <>
        <path d="M1 2h6l1 1.500h7V15H1z" fill="#777" />
        <path d="M6 12a3.300 3.300 0 114 0M10 10v2.500H7.500" stroke="#fff" />
      </>
    ),
  },
  {
    label: "帮助",
    art: (
      <>
        <circle cx="8" cy="8" r="8" fill="#777" />
        <path d="M5.500 6.500C5.500 3 10.500 3 10.500 6.200 10.500 8 8 8 8 10M8 11v2" stroke="#fff" strokeWidth="1.600" />
      </>
    ),
  },
];

function SideNav() {
  return (
    <nav className="flex w-10 shrink-0 flex-col bg-[#eceef0] pr-[2px] text-[#333]">
      <div className="flex h-[29px] shrink-0 items-center justify-center">
        <span className="h-[3px] w-4 border-y border-[#cfd1d4]" />
      </div>
      {sideItems.map((s) => (
        <button key={s.label} className={`-mr-[2px] flex h-[50px] shrink-0 flex-col items-center justify-center gap-[1px] pr-[2px] pt-1 ${s.label === "动画" ? "bg-white" : ""}`}>
          <Icon>{s.art}</Icon>
          <span className="leading-4">{s.label}</span>
        </button>
      ))}
    </nav>
  );
}

/* ---------- animation pane ---------- */

const disabledBox = "bg-[#dcdcdc] text-[#a3a3a3]";

function AnimationPane() {
  return (
    <section className="flex w-[259px] shrink-0 flex-col bg-white pl-[10px] pr-[9px] text-[#3d3d3d]">
      <header className="relative flex h-[29px] shrink-0 items-center">
        <button className="flex items-center gap-[5px]">自定义动画 <Caret /></button>
        <div className="ml-auto flex gap-[11px] pr-[3px] text-[#777]">
          <button aria-label="停靠" className="pr-[1px]">
            <Icon w={9} h={9}><path d="M8.500.500L1 8" stroke="currentColor" /><path d="M0 3v6h6z" fill="currentColor" /></Icon>
          </button>
          <button aria-label="关闭动画窗格"><Cross size={10} /></button>
        </div>
        <div className="pointer-events-none absolute left-[-10px] top-[28px] z-10 h-12 w-[120px] border-[3px] border-[#dc0a10]" />
      </header>
      <button className="flex h-[38px] shrink-0 items-center gap-[6px]">
        <Icon>
          <path d="M.5.500h9v9h-9z" fill="#6684d0" stroke="#41589c" />
          <path d="M4.500 3.500h8v9h-8z" fill="#f2d35e" stroke="#9d8430" />
          <path d="M9 6l6 6-3 .500 1.500 3-1.500.500-1.200-3L9 14.500z" fill="#fff" stroke="#444a66" strokeWidth=".8" />
        </Icon>
        选择窗格
      </button>
      <h3 className="shrink-0 pb-[5px] pt-[3px] text-[14px] leading-[22px] text-[#d8692f]">自定义动画</h3>
      <div className="flex shrink-0 gap-[6px] pl-[15px]">
        <button className={`flex h-6 w-24 items-center justify-between px-[6px] ${outlined}`}>
          <Icon w={12} h={12}><path d="M1 11l1-3 6-5 2 2-6 5z" fill="#666" /></Icon>
          <span className="pl-1">添加效果</span>
          <svg width="8" height="5" viewBox="0 0 8 5" className="-mr-[2px]" aria-hidden="true"><path d="M0 0h8L4 5z" fill="#555" /></svg>
        </button>
        <button disabled className={`flex h-[23px] w-[59px] items-center justify-between px-[6px] ${disabledBox}`}>
          <Icon w={12} h={13}><path d="M0 2.500h11M3.500 2V.500h4V2M1.500 3v9.500h8V3M4 5v6M5.500 5v6M7 5v6" stroke="#9a9a9a" /></Icon>
          删除
        </button>
      </div>
      <h3 className="shrink-0 pb-[10px] pt-[11px] text-[14px] leading-[21px] text-[#a2a2a2]">修改效果</h3>
      <div className="flex shrink-0 flex-col gap-[9px] text-[#a2a2a2]">
        {["开始:", "属性:", "速度:"].map((l) => (
          <label key={l} className="grid grid-cols-[48px_1fr] items-center">
            <span className="pl-[14px]">{l}</span>
            <span className="grid items-center">
              <select disabled className="col-start-1 row-start-1 h-6 w-full appearance-none border border-[#dadada] bg-[#eaeaea] opacity-100" />
              <span className="col-start-1 row-start-1 justify-self-end pr-[6px]">
                <svg width="7" height="4" viewBox="0 0 7 4" aria-hidden="true"><path d="M0 0h7L3.500 4z" fill="#b5b5b5" /></svg>
              </span>
            </span>
          </label>
        ))}
      </div>
      <div className="mt-3 min-h-[80px] flex-1 border border-[#d6d6d6] px-4 pt-4 text-center font-['Noto_Sans_CJK_SC',sans-serif] leading-[17px]">
        选中幻灯片的某个元素，然后单击“添加效果”添加动画。
      </div>
      <div className="flex shrink-0 items-center justify-center gap-[8px] pt-[11px] text-[#999]">
        <button disabled aria-label="提前" className={`flex size-[22px] items-center justify-center ${disabledBox}`}>
          <Icon w={10} h={11}><path d="M5 0l5 5H7.500v6h-5V5H0z" fill="#aaa" /></Icon>
        </button>
        <span>重新排序</span>
        <button disabled aria-label="推后" className={`flex size-[22px] items-center justify-center ${disabledBox}`}>
          <Icon w={10} h={11}><path d="M5 11l5-5H7.500V0h-5v6H0z" fill="#aaa" /></Icon>
        </button>
      </div>
      <div className="flex shrink-0 gap-[7px] pb-[11px] pt-3">
        <button disabled className={`flex h-[23px] w-[59px] items-center justify-between px-[6px] ${disabledBox}`}>
          <Icon w={11} h={11}><circle cx="5.500" cy="5.500" r="5" stroke="#9a9a9a" /><path d="M4 3l4 2.500L4 8z" fill="#9a9a9a" /></Icon>
          播放
        </button>
        <button className={`flex h-6 w-24 items-center justify-between px-1 pr-[6px] ${outlined}`}>
          <Icon w={17} h={16}>
            <path d="M0 1h16" stroke="#555" strokeWidth="2" />
            <path d="M1.500 2v8.500H5M3 4h3M3 6.500h2M14.500 2v2" stroke="#666" />
            <circle cx="10" cy="8" r="5" fill="#ee7f42" />
            <path d="M8.500 5.500l4 2.500-4 2.500z" fill="#fff" />
            <path d="M8 13l4 3H4z" fill="#555" />
          </Icon>
          幻灯片播放
        </button>
      </div>
      <label className="flex h-[33px] shrink-0 items-center gap-[5px] border-t border-[#d8d8d8]">
        <span className="grid size-[13px]">
          <input type="checkbox" defaultChecked className="col-start-1 row-start-1 size-[13px] appearance-none border border-[#b9b9b9] bg-white" />
          <svg width="13" height="13" viewBox="0 0 13 13" className="pointer-events-none col-start-1 row-start-1" aria-hidden="true">
            <path d="M3 6.500l2.500 3L10.500 4" stroke="#e8703a" strokeWidth="2" fill="none" />
          </svg>
        </span>
        自动预览
      </label>
    </section>
  );
}

/* ---------- footer ---------- */

const modes = ["目录+PPT", "仅目录", "仅PPT", "PPT+网页", "目录+PPT+网页"];

function Footer() {
  return (
    <footer className="flex h-[29px] shrink-0 items-center">
      <div className="flex w-[281px] shrink-0 items-center gap-[18px] pb-[6px] pl-[10px] text-[15px] text-[#17178c]">
        <button className="flex items-center gap-[6px] leading-5">
          <Icon w={18} h={17}>
            <path d="M.5 2.500h7v11h-7zM5.500.500h6l3 3v6h-9z" fill="#fff" stroke="#8a8f9c" />
            <path d="M5 8h4l1 1.500h7V16H5z" fill="#f0c653" stroke="#a8842a" />
            <path d="M11 2c3-1 5 1 4 4" stroke="#3e6db4" strokeWidth="1.500" />
          </Icon>
          刷新文件夹
        </button>
        <button className="flex items-center gap-[6px] leading-5">
          <Icon w={18} h={17}>
            <path d="M.5 15.500v-11h5L7 6h6v3" fill="#eec35a" stroke="#a8842a" />
            <path d="M.5 15.500l4-7.500h13l-4 7.500z" fill="#fbdc84" stroke="#a8842a" />
            <path d="M9 3c3-3 6-2 7 1M17 1v3.500h-3.500" stroke="#5a86c4" strokeWidth="1.300" />
          </Icon>
          打开
        </button>
      </div>
      <fieldset className="flex items-center gap-[9px] whitespace-nowrap font-['Liberation_Serif','Noto_Sans_CJK_SC',serif] text-[15px] leading-5 text-[#22242e]">
        {modes.map((m, i) => (
          <label key={m} className="flex items-center gap-1">
            <input
              type="radio"
              name="mode"
              defaultChecked={i === 0}
              className="size-[13px] appearance-none rounded-full border border-[#a9aebb] bg-white checked:bg-[#4a4d58] checked:shadow-[inset_0_0_0_3px_#fff]"
            />
            {m}
          </label>
        ))}
      </fieldset>
      <a href="#export" className="ml-auto whitespace-nowrap pb-[9px] pr-8 text-[15px] leading-5 text-[#17178c]">导出为网页...</a>
    </footer>
  );
}

export default function App() {
  return (
    <div className="relative flex h-screen flex-col overflow-hidden border border-[#4d4e5a] bg-[#d6dbe9] font-['Noto_Sans','Noto_Sans_CJK_SC',sans-serif] text-xs">
      <TitleBar />
      <Watermark />
      <div className="flex min-h-0 flex-1 pr-[6px]">
        <DirectoryPanel />
        <div className="flex w-[11px] shrink-0 cursor-col-resize items-center justify-center">
          <Icon w={5} h={18}><path d="M1 0v18M4 0v18" stroke="#8d97b5" strokeDasharray="1 2" /></Icon>
        </div>
        <main className="flex min-w-0 flex-1 flex-col overflow-hidden">
          <TabStrip />
          <Ribbon />
          <DocumentBar />
          <div className="flex min-h-0 flex-1 bg-[#c1c3cd]">
            <Thumbnails />
            <Canvas />
            <SelectionPane />
            <SideNav />
            <AnimationPane />
            <div className="flex w-[7px] shrink-0 flex-col justify-center bg-[#dedee0] pt-[46px]">
              <button aria-label="收起窗格" className="flex h-[100px] items-center justify-center bg-[#e8702a]">
                <Icon w={3} h={6}><path d="M0 0v6l3-3z" fill="#fff" /></Icon>
              </button>
            </div>
          </div>
        </main>
      </div>
      <Footer />
    </div>
  );
}
